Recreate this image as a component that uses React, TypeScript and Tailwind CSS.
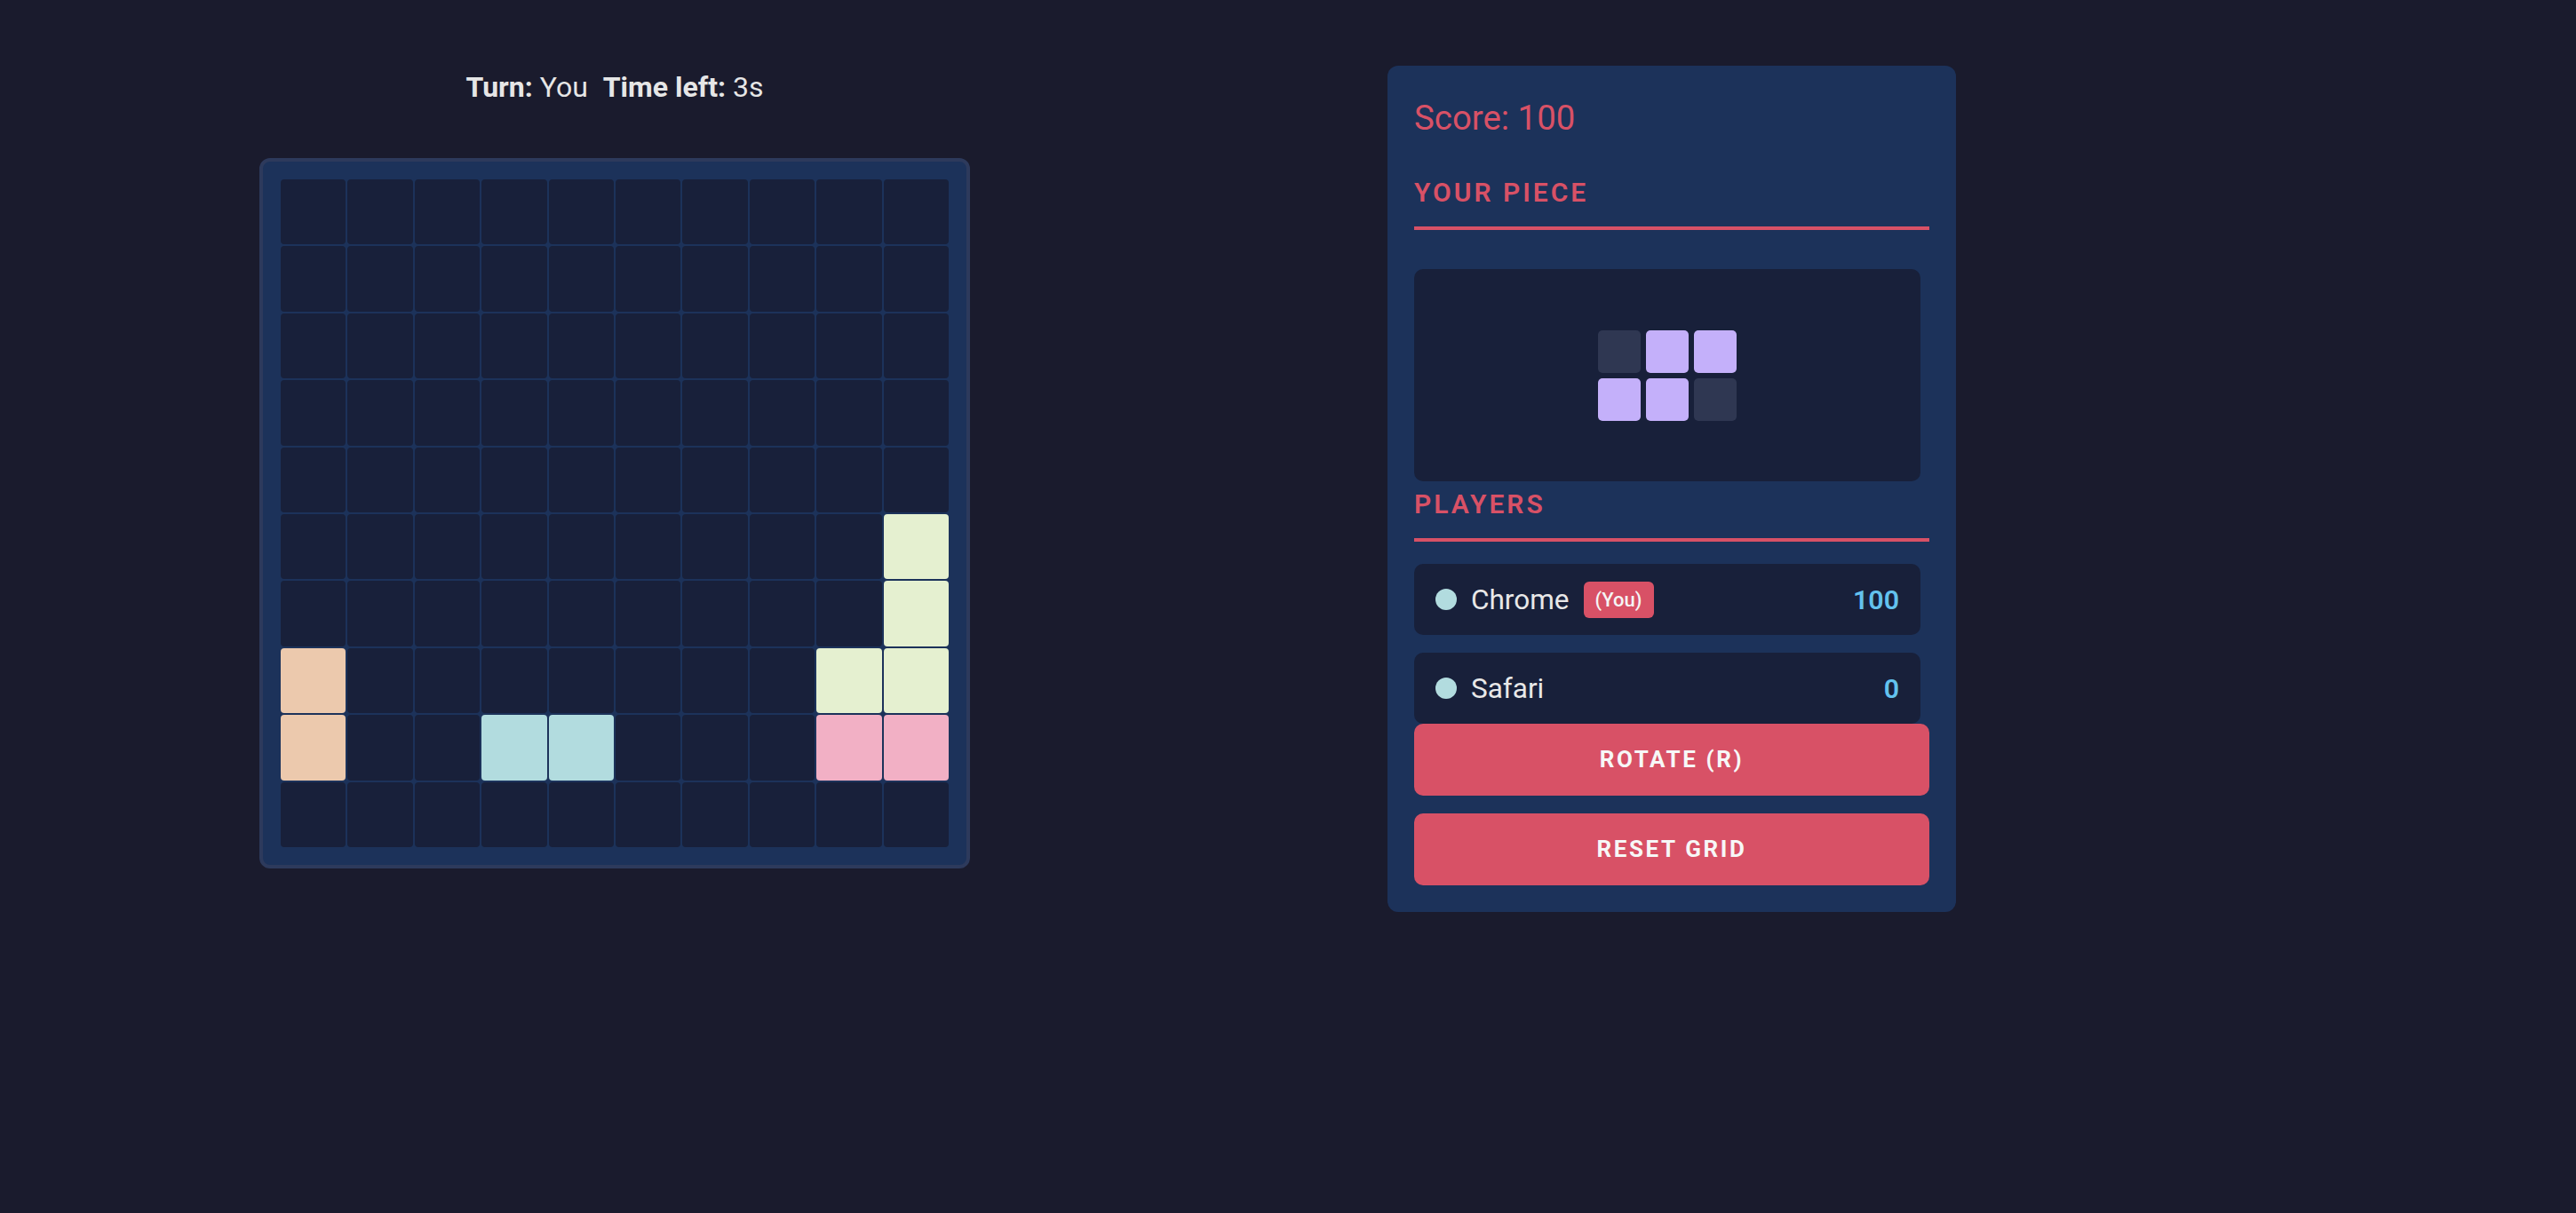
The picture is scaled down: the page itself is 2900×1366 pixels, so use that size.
import React from "react";

type CellKey = "" | "peach" | "teal" | "lime" | "pink";

const cellClass: Record<CellKey, string> = {
  "": "bg-[#18203a]",
  peach: "bg-[#ecc9ad]",
  teal: "bg-[#b2dcdf]",
  lime: "bg-[#e5f0d0]",
  pink: "bg-[#f2b0c5]",
};

const buildBoard = (): CellKey[][] => {
  const b: CellKey[][] = Array.from({ length: 10 }, () => Array<CellKey>(10).fill(""));
  b[5][9] = "lime";
  b[6][9] = "lime";
  b[7][0] = "peach";
  b[7][8] = "lime";
  b[7][9] = "lime";
  b[8][0] = "peach";
  b[8][3] = "teal";
  b[8][4] = "teal";
  b[8][8] = "pink";
  b[8][9] = "pink";
  return b;
};

const piece = [
  [0, 1, 1],
  [1, 1, 0],
];

const players = [
  { name: "Chrome", you: true, score: 100 },
  { name: "Safari", you: false, score: 0 },
];

export default function App() {
  const board = buildBoard();
  return (
    <div className="min-h-[1366px] w-full bg-[#1a1b2d] font-['Roboto',sans-serif]">
      <div className="flex items-start pl-[292px] pt-[74px] gap-[470px]">
        {/* Left column */}
        <div className="flex w-[800px] flex-col items-center">
          <div className="text-[32px] leading-[48px] text-[#e6e6e6]">
            <span className="font-bold">Turn:</span> You
            <span className="ml-[17px] font-bold">Time left:</span> 3s
          </div>
          <div className="mt-[56px] rounded-xl border-4 border-[#2d3a5c] bg-[#1c325a] p-[20px]">
            <div className="grid h-[752px] w-[752px] grid-cols-10 grid-rows-10 gap-[2px]">
              {board.flatMap((row, r) =>
                row.map((c, ci) => (
                  <div key={`${r}-${ci}`} className={`rounded-[4px] ${cellClass[c]}`} />
                ))
              )}
            </div>
          </div>
        </div>

        {/* Right panel */}
        <div className="flex w-[640px] flex-col rounded-xl bg-[#1c325a] p-[30px]">
          <div className="text-[38.4px] leading-[57.6px] text-[#d85166]">Score: 100</div>

          <div className="mt-[32.6px] border-b-4 border-[#d85166] pb-[16px] text-[30px] font-semibold uppercase leading-[45px] tracking-[0.1em] text-[#d85166]">
            Your Piece
          </div>

          <div className="mt-[44px] flex h-[239px] w-[570px] items-center justify-center rounded-[10px] bg-[#18203a]">
            <div className="grid grid-cols-3 gap-[6px]">
              {piece.flatMap((row, r) =>
                row.map((v, c) => (
                  <div
                    key={`${r}-${c}`}
                    className={`h-[48px] w-[48px] rounded-[5px] ${v ? "bg-[#c4b0fa]" : "bg-[#2f3752]"}`}
                  />
                ))
              )}
            </div>
          </div>

          <div className="mt-[3.3px] border-b-4 border-[#d85166] pb-[16px] text-[30px] font-semibold uppercase leading-[45px] tracking-[0.1em] text-[#d85166]">
            Players
          </div>

          <div className="mt-[25px] flex flex-col gap-[20px]">
            {players.map((p) => (
              <div
                key={p.name}
                className="flex h-[80px] w-[570px] items-center rounded-[10px] bg-[#18203a] px-[24px]"
              >
                <span className="h-[24px] w-[24px] rounded-full bg-[#b2dcdf]" />
                <span className="ml-[16px] text-[31.5px] text-[#e8e8e8]">{p.name}</span>
                {p.you && (
                  <span className="ml-[16px] rounded-[6px] bg-[#d85166] px-[13px] py-[4px] text-[22px] font-medium leading-[33px] text-[#f5f5f5]">
                    (You)
                  </span>
                )}
                <span className="ml-auto text-[30.4px] font-semibold text-[#63c2ee]">{p.score}</span>
              </div>
            ))}
          </div>

          <button className="flex h-[80.5px] w-full items-center justify-center rounded-[10px] bg-[#d85166] text-[26px] font-bold uppercase tracking-[0.1em] text-[#f7f7f7]">
            Rotate (R)
          </button>
          <button className="mt-[20.5px] flex h-[80.5px] w-full items-center justify-center rounded-[10px] bg-[#d85166] text-[26px] font-bold uppercase tracking-[0.1em] text-[#f7f7f7]">
            Reset Grid
          </button>
        </div>
      </div>
    </div>
  );
}
